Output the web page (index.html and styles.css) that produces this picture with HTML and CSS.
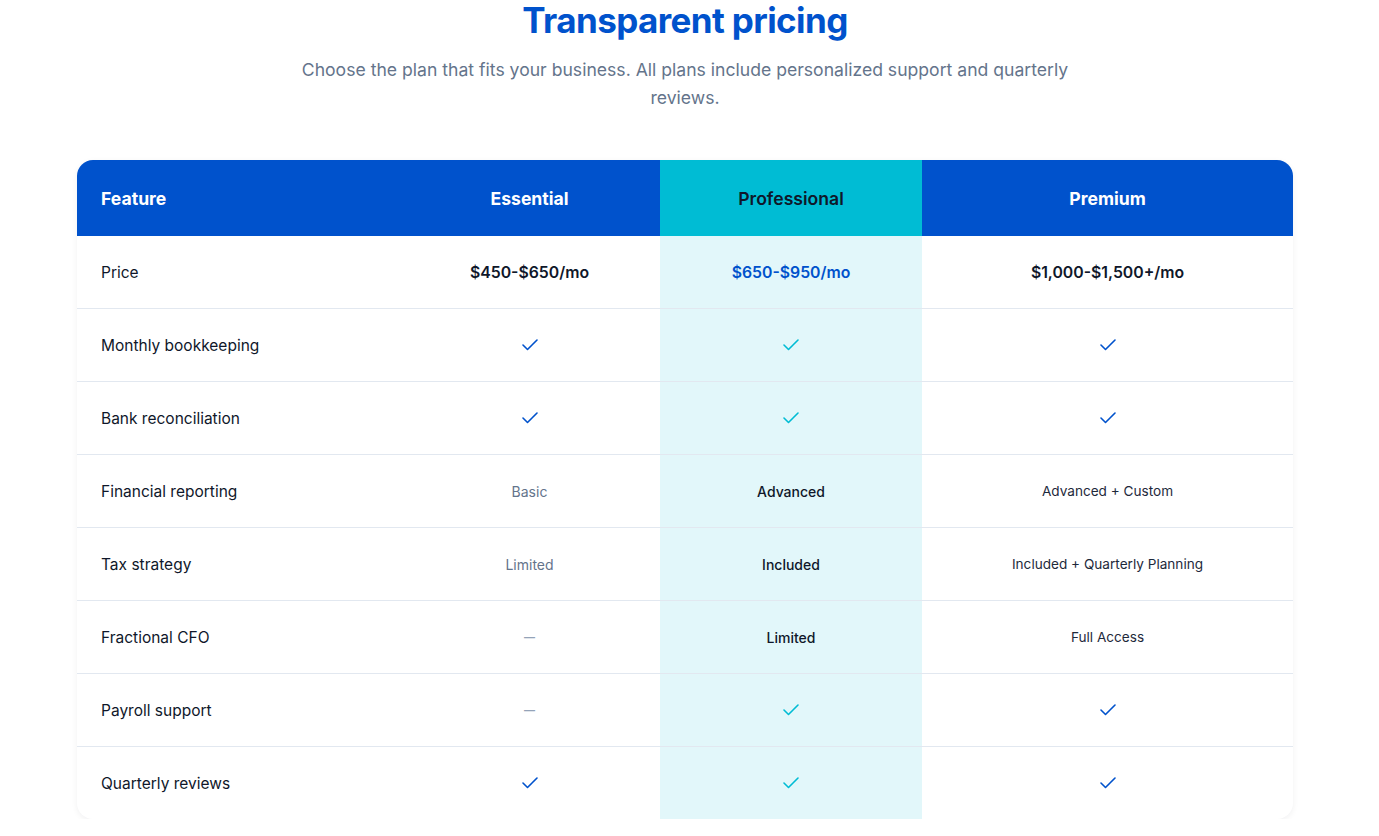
FILE: index.html
```html
<!DOCTYPE html>
<html lang="en">
<head>
<meta charset="utf-8">
<title>Transparent pricing</title>
<link rel="stylesheet" href="styles.css">
</head>
<body>
<section class="pricing">
  <header class="intro">
    <h2 class="title">Transparent pricing</h2>
    <p class="lead">Choose the plan that fits your business. All plans include personalized support and quarterly reviews.</p>
  </header>

  <div class="table">
    <div class="row head">
      <div class="cell feat">Feature</div>
      <div class="cell">Essential</div>
      <div class="cell pro">Professional</div>
      <div class="cell">Premium</div>
    </div>

    <div class="row">
      <div class="cell feat">Price</div>
      <div class="cell price">$450-$650/mo</div>
      <div class="cell pro price pro-price">$650-$950/mo</div>
      <div class="cell price">$1,000-$1,500+/mo</div>
    </div>

    <div class="row">
      <div class="cell feat">Monthly bookkeeping</div>
      <div class="cell"><svg class="check" viewBox="0 0 16 12"><polyline points="1,6 5.5,10.5 15,1"/></svg></div>
      <div class="cell pro"><svg class="check cyan" viewBox="0 0 16 12"><polyline points="1,6 5.5,10.5 15,1"/></svg></div>
      <div class="cell"><svg class="check" viewBox="0 0 16 12"><polyline points="1,6 5.5,10.5 15,1"/></svg></div>
    </div>

    <div class="row">
      <div class="cell feat">Bank reconciliation</div>
      <div class="cell"><svg class="check" viewBox="0 0 16 12"><polyline points="1,6 5.5,10.5 15,1"/></svg></div>
      <div class="cell pro"><svg class="check cyan" viewBox="0 0 16 12"><polyline points="1,6 5.5,10.5 15,1"/></svg></div>
      <div class="cell"><svg class="check" viewBox="0 0 16 12"><polyline points="1,6 5.5,10.5 15,1"/></svg></div>
    </div>

    <div class="row">
      <div class="cell feat">Financial reporting</div>
      <div class="cell muted">Basic</div>
      <div class="cell pro strong">Advanced</div>
      <div class="cell val">Advanced + Custom</div>
    </div>

    <div class="row">
      <div class="cell feat">Tax strategy</div>
      <div class="cell muted">Limited</div>
      <div class="cell pro strong">Included</div>
      <div class="cell val">Included + Quarterly Planning</div>
    </div>

    <div class="row">
      <div class="cell feat">Fractional CFO</div>
      <div class="cell dash">—</div>
      <div class="cell pro strong">Limited</div>
      <div class="cell val">Full Access</div>
    </div>

    <div class="row">
      <div class="cell feat">Payroll support</div>
      <div class="cell dash">—</div>
      <div class="cell pro"><svg class="check cyan" viewBox="0 0 16 12"><polyline points="1,6 5.5,10.5 15,1"/></svg></div>
      <div class="cell"><svg class="check" viewBox="0 0 16 12"><polyline points="1,6 5.5,10.5 15,1"/></svg></div>
    </div>

    <div class="row last">
      <div class="cell feat">Quarterly reviews</div>
      <div class="cell"><svg class="check" viewBox="0 0 16 12"><polyline points="1,6 5.5,10.5 15,1"/></svg></div>
      <div class="cell pro"><svg class="check cyan" viewBox="0 0 16 12"><polyline points="1,6 5.5,10.5 15,1"/></svg></div>
      <div class="cell"><svg class="check" viewBox="0 0 16 12"><polyline points="1,6 5.5,10.5 15,1"/></svg></div>
    </div>
  </div>
</section>
</body>
</html>
```

FILE: styles.css
```css
* { box-sizing: border-box; }

html, body {
  margin: 0;
  padding: 0;
  background: #ffffff;
}

body {
  font-family: Inter, "Noto Sans", "Liberation Sans", sans-serif;
  color: #0f172a;
  padding-right: 9px;
}

.pricing {
  width: 1216px;
  margin: 0 auto;
}

.intro {
  display: flex;
  flex-direction: column;
  align-items: center;
  text-align: center;
}

.title {
  margin: -1px 0 0;
  font-size: 35px;
  line-height: 42px;
  font-weight: 700;
  letter-spacing: -0.6px;
  color: #0052cc;
}

.lead {
  margin: 15px 0 0;
  max-width: 790px;
  font-size: 17.6px;
  line-height: 28px;
  color: #64748b;
}

.table {
  margin-top: 48px;
  border-radius: 16px;
  overflow: hidden;
  background: #ffffff;
  box-shadow: 0 2px 6px rgba(15, 23, 42, 0.06);
}

.row {
  display: grid;
  grid-template-columns: 322px 261px 262px 371px;
  height: 73px;
  border-bottom: 1px solid #e2e8f0;
}

.row.last {
  height: 72px;
  border-bottom: none;
}

.row.head {
  height: 76px;
  border-bottom: none;
  background: #0052cc;
  color: #ffffff;
  font-weight: 700;
}

.cell {
  display: flex;
  align-items: center;
  justify-content: center;
  font-size: 13.6px;
}

.row.head .cell { font-size: 17.6px; }

.cell.feat {
  justify-content: flex-start;
  padding-left: 24px;
  font-size: 15.5px;
}

.row.head .cell.feat { font-size: 17.6px; }

.cell.pro {
  background: #e2f7fa;
}

.row.head .cell.pro {
  background: #00bcd4;
  color: #0f172a;
  font-weight: 600;
}

.price {
  font-size: 15.8px;
  font-weight: 600;
  color: #0f172a;
}

.pro-price {
  color: #0052cc;
}

.muted {
  color: #64748b;
  font-size: 14px;
}

.strong {
  font-weight: 500;
  color: #0f172a;
  font-size: 14px;
}

.val {
  color: #1e293b;
}

.dash {
  color: #94a3b8;
  font-size: 11px;
  font-weight: 600;
}

.check {
  width: 16px;
  height: 12px;
  fill: none;
  stroke: #0052cc;
  stroke-width: 1.6;
  stroke-linecap: round;
  stroke-linejoin: round;
}

.check.cyan {
  stroke: #00bcd4;
}
```
